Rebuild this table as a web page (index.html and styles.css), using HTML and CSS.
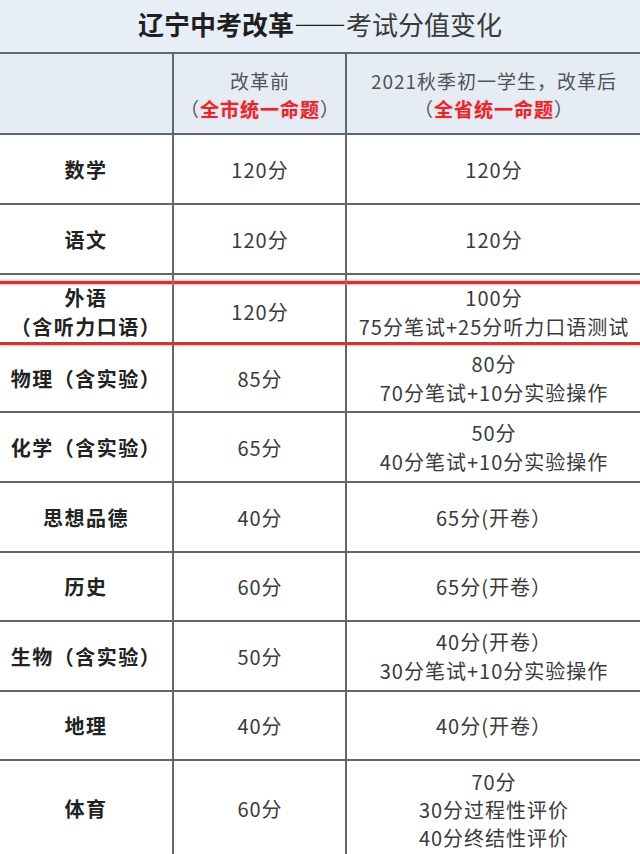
FILE: index.html
```html
<!DOCTYPE html>
<html lang="zh">
<head>
<meta charset="utf-8">
<title>辽宁中考改革——考试分值变化</title>
<link rel="stylesheet" href="styles.css">
</head>
<body>
<div class="sheet">
  <div class="title"><b>辽宁中考改革——</b><span>考试分值变化</span></div>
  <div class="row head">
    <div class="cell"></div>
    <div class="cell"><div>改革前</div><div>（<em>全市统一命题</em>）</div></div>
    <div class="cell"><div>2021秋季初一学生，改革后</div><div>（<em>全省统一命题</em>）</div></div>
  </div>
  <div class="row r70"><div class="cell subj">数学</div><div class="cell">120分</div><div class="cell">120分</div></div>
  <div class="row r70"><div class="cell subj">语文</div><div class="cell">120分</div><div class="cell">120分</div></div>
  <div class="row r70 marked"><div class="cell subj"><div>外语</div><div>（含听力口语）</div></div><div class="cell">120分</div><div class="cell"><div>100分</div><div>75分笔试+25分听力口语测试</div></div></div>
  <div class="row r68"><div class="cell subj">物理（含实验）</div><div class="cell">85分</div><div class="cell"><div>80分</div><div>70分笔试+10分实验操作</div></div></div>
  <div class="row r70"><div class="cell subj">化学（含实验）</div><div class="cell">65分</div><div class="cell"><div>50分</div><div>40分笔试+10分实验操作</div></div></div>
  <div class="row r70"><div class="cell subj">思想品德</div><div class="cell">40分</div><div class="cell">65分(开卷）</div></div>
  <div class="row r69"><div class="cell subj">历史</div><div class="cell">60分</div><div class="cell">65分(开卷）</div></div>
  <div class="row r70"><div class="cell subj">生物（含实验）</div><div class="cell">50分</div><div class="cell"><div>40分(开卷）</div><div>30分笔试+10分实验操作</div></div></div>
  <div class="row r69"><div class="cell subj">地理</div><div class="cell">40分</div><div class="cell">40分(开卷）</div></div>
  <div class="row r93 last"><div class="cell subj">体育</div><div class="cell">60分</div><div class="cell tight"><div>70分</div><div>30分过程性评价</div><div>40分终结性评价</div></div></div>
</div>
</body>
</html>
```
FILE: styles.css
```css
html, body {
  margin: 0;
  padding: 0;
  background: #ffffff;
}
body {
  font-family: "Noto Sans CJK SC", "Noto Sans", sans-serif;
  color: #333;
}
.sheet {
  width: 640px;
  height: 854px;
  overflow: hidden;
}
.title {
  background: #e7eef6;
  border-bottom: 2px solid #63676b;
  display: flex;
  align-items: center;
  justify-content: center;
  font-size: 26px;
  line-height: 1;
  padding-bottom: 4px;
  height: 48px;
}
.title b {
  font-weight: 700;
  color: #1f1f1f;
}
.title span {
  font-weight: 400;
  color: #3a3a3a;
}
.row {
  display: grid;
  grid-template-columns: 174px 173px 1fr;
  border-bottom: 2px solid #63676b;
  box-sizing: border-box;
}
.head {
  height: 81px;
  background: #e5ecf4;
}
.r70 { height: 70px; }
.r69 { height: 69px; }
.r68 { height: 68px; }
.r93 { height: 95px; border-bottom: none; }
.cell {
  display: flex;
  flex-direction: column;
  align-items: center;
  justify-content: center;
  text-align: center;
  border-right: 2px solid #63676b;
  font-size: 20px;
  letter-spacing: 1px;
  padding-left: 1px;
  line-height: 29px;
  color: #3a3a3a;
  white-space: nowrap;
  position: relative;
}
.cell:last-child {
  border-right: none;
}
.head .cell {
  font-size: 19px;
  letter-spacing: 1px;
  line-height: 28px;
  color: #505457;
  padding-top: 2px;
}
.head em {
  font-style: normal;
  font-weight: 700;
  color: #e0282e;
  text-shadow: 0 0 2px rgba(240, 90, 90, 0.45);
}
.subj {
  font-weight: 700;
  color: #222;
  font-size: 20px;
  letter-spacing: 1.5px;
  padding-left: 2px;
  padding-right: 2px;
}
.tight {
  line-height: 28px;
  padding-top: 2px;
}
.marked {
  border-bottom: 3px solid #c23a3c;
  box-shadow: 0 1px 2px rgba(230, 120, 120, 0.6);
}
.marked .cell {
  padding-top: 6px;
}
.marked .cell::before {
  content: "";
  position: absolute;
  left: 0;
  right: -2px;
  top: 6px;
  height: 3px;
  background: #c23a3c;
  box-shadow: 0 0 2px 1px rgba(240, 140, 140, 0.7);
}
.marked .cell:last-child::before {
  right: 0;
}
```
